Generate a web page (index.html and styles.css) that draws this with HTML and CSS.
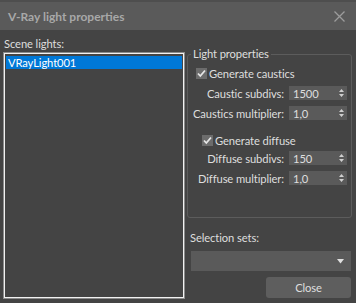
FILE: index.html
```html
<!DOCTYPE html>
<html>
<head>
<meta charset="utf-8">
<link rel="stylesheet" href="styles.css">
</head>
<body>
<div class="window">
  <div class="titlebar">
    <span class="title">V-Ray light properties</span>
    <svg class="close-x" width="11" height="11" viewBox="0 0 11 11"><path d="M0.5 0.5 L10.5 10.5 M10.5 0.5 L0.5 10.5" stroke="#9c9c9c" stroke-width="1.3" fill="none"/></svg>
  </div>
  <div class="content">
    <div class="left">
      <div class="label">Scene lights:</div>
      <div class="listbox">
        <div class="item selected">VRayLight001</div>
      </div>
    </div>
    <div class="right">
      <div class="group">
        <div class="legend">Light properties</div>
        <div class="check-row r1">
          <span class="checkbox"><svg width="11" height="11" viewBox="0 0 11 11"><path d="M2 5.5 L4.3 8 L9 2.5" stroke="#e6e6e6" stroke-width="1.8" fill="none"/></svg></span>
          <span>Generate caustics</span>
        </div>
        <div class="spin-row r2">
          <span>Caustic subdivs:</span>
          <div class="spinner"><span>1500</span><svg width="5" height="8" viewBox="0 0 5 8"><path d="M0 3 L2.5 0 L5 3 Z M0 5 L2.5 8 L5 5 Z" fill="#cfcfcf"/></svg></div>
        </div>
        <div class="spin-row r3">
          <span>Caustics multiplier:</span>
          <div class="spinner"><span>1,0</span><svg width="5" height="8" viewBox="0 0 5 8"><path d="M0 3 L2.5 0 L5 3 Z M0 5 L2.5 8 L5 5 Z" fill="#cfcfcf"/></svg></div>
        </div>
        <div class="check-row r4">
          <span class="checkbox"><svg width="11" height="11" viewBox="0 0 11 11"><path d="M2 5.5 L4.3 8 L9 2.5" stroke="#e6e6e6" stroke-width="1.8" fill="none"/></svg></span>
          <span>Generate diffuse</span>
        </div>
        <div class="spin-row r5">
          <span>Diffuse subdivs:</span>
          <div class="spinner"><span>150</span><svg width="5" height="8" viewBox="0 0 5 8"><path d="M0 3 L2.5 0 L5 3 Z M0 5 L2.5 8 L5 5 Z" fill="#cfcfcf"/></svg></div>
        </div>
        <div class="spin-row r6">
          <span>Diffuse multiplier:</span>
          <div class="spinner"><span>1,0</span><svg width="5" height="8" viewBox="0 0 5 8"><path d="M0 3 L2.5 0 L5 3 Z M0 5 L2.5 8 L5 5 Z" fill="#cfcfcf"/></svg></div>
        </div>
      </div>
      <div class="label sel-label">Selection sets:</div>
      <div class="dropdown"><svg width="7" height="5" viewBox="0 0 7 5"><path d="M0 0 L7 0 L3.5 4.5 Z" fill="#e0e0e0"/></svg></div>
      <div class="button">Close</div>
    </div>
  </div>
</div>
</body>
</html>
```

FILE: styles.css
```css
html, body {
  margin: 0;
  padding: 0;
  background: #3c3c3c;
}
body {
  width: 356px;
  height: 303px;
  overflow: hidden;
  font-family: "Lato", "Noto Sans", sans-serif;
  font-size: 11.2px;
  letter-spacing: -0.1px;
  color: #dedede;
  white-space: nowrap;
}
.window {
  width: 356px;
  height: 303px;
  background: #444444;
  display: flex;
  flex-direction: column;
}
.titlebar {
  height: 30px;
  flex: none;
  box-sizing: border-box;
  border-top: 2px solid #4e4e4e;
  background: #5a5a5a;
  display: flex;
  align-items: center;
  justify-content: space-between;
  padding: 0 11px 0 8px;
}
.title {
  font-weight: bold;
  font-size: 12px;
  letter-spacing: 0;
  color: #a8a8a8;
}
.close-x {
  display: block;
}
.content {
  flex: 1;
  display: flex;
  padding: 0 4px 0 4px;
}
.left {
  width: 180px;
  display: flex;
  flex-direction: column;
  padding-top: 6px;
}
.label {
  line-height: 15px;
  height: 15px;
}
.listbox {
  margin-top: 2px;
  height: 245px;
  box-sizing: border-box;
  border: 1px solid #f2f2f2;
  outline: 1px solid #8c8c8c;
  padding: 2px 1px;
}
.item {
  height: 13px;
  line-height: 13px;
  padding-left: 2px;
}
.item.selected {
  background: #0078d7;
  color: #ffffff;
}
.right {
  width: 165px;
  margin-left: 3px;
  display: flex;
  flex-direction: column;
}
.group {
  position: relative;
  margin-top: 24px;
  height: 164px;
  box-sizing: border-box;
  border: 1px solid #5c5c5c;
  border-radius: 3px;
  display: flex;
  flex-direction: column;
  padding: 11px 4px 0 0;
}
.legend {
  position: absolute;
  top: -9px;
  left: 3px;
  padding: 0 2px;
  background: #444444;
  line-height: 15px;
}
.check-row {
  height: 14px;
  display: flex;
  align-items: center;
  gap: 2px;
}
.check-row.r1 { padding-left: 8px; }
.check-row.r4 { padding-left: 14px; margin-top: 13px; }
.checkbox {
  width: 11px;
  height: 11px;
  background: #6c6c6c;
  display: block;
}
.checkbox svg { display: block; }
.spin-row {
  height: 14px;
  display: flex;
  align-items: center;
  justify-content: flex-end;
  gap: 5px;
}
.r2, .r3, .r6 { margin-top: 6px; }
.r5 { margin-top: 4px; }
.spinner {
  width: 58px;
  height: 14px;
  box-sizing: border-box;
  background: #5a5a5a;
  display: flex;
  align-items: center;
  justify-content: space-between;
  padding: 0 3px 0 4px;
}
.spinner svg { display: block; }
.sel-label {
  margin-top: 12px;
  margin-left: 3px;
}
.dropdown {
  margin: 6px 1px 0 4px;
  height: 20px;
  background: #5a5a5a;
  display: flex;
  align-items: center;
  justify-content: flex-end;
  padding-right: 7px;
}
.dropdown svg { display: block; }
.button {
  align-self: flex-end;
  margin: 6px 1px 0 0;
  width: 85px;
  height: 21px;
  line-height: 21px;
  text-align: center;
  background: #5e5e5e;
  border-radius: 3px;
}
```
